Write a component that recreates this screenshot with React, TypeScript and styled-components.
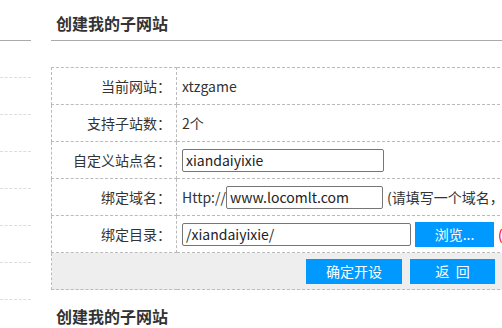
import React from "react";
import styled, { createGlobalStyle } from "styled-components";

const Global = createGlobalStyle`
  html, body { margin: 0; padding: 0; background: #fff; overflow: hidden; }
  body { font-family: "Noto Sans CJK SC", "Noto Sans", sans-serif; color: #333; font-size: 14px; }
  #root { width: 502px; height: 328px; overflow: hidden; }
`;

const Page = styled.div`
  display: flex;
  gap: 20px;
  width: 800px;
`;

const Sidebar = styled.div`
  width: 31px;
  flex: none;
`;

const SideHead = styled.div`
  height: 40px;
  border-bottom: 1px solid #aaa;
`;

const SideItem = styled.div`
  height: 36px;
  border-bottom: 1px dashed #ddd;
`;

const Main = styled.div`
  flex: 1;
  display: flex;
  flex-direction: column;
`;

const Title = styled.h2<{ $line?: boolean }>`
  margin: 0;
  height: 41px;
  box-sizing: border-box;
  padding: 8px 0 0 5px;
  line-height: 30px;
  font-size: 16px;
  font-weight: bold;
  color: #333;
  border-bottom: ${(p) => (p.$line ? "1px solid #aaa" : "none")};
`;

const Table = styled.table`
  margin-top: 26px;
  width: 699px;
  border-collapse: collapse;
  font-size: 14px;
`;

const Row = styled.tr`
  height: 37px;
`;

const Label = styled.td`
  width: 119px;
  border: 1px dashed #bbb;
  text-align: right;
  padding: 0 5px 0 0;
  vertical-align: middle;
  white-space: nowrap;
`;

const Value = styled.td`
  border: 1px dashed #bbb;
  padding: 0 0 0 5px;
  vertical-align: middle;
  white-space: nowrap;
`;

const Inline = styled.div`
  display: flex;
  align-items: center;
`;

const Input = styled.input<{ $w: number }>`
  width: ${(p) => p.$w}px;
  height: 23px;
  box-sizing: border-box;
  border: 1px solid #767676;
  border-radius: 2px;
  padding: 0 3px;
  font: inherit;
  font-size: 14px;
  color: #222;
  outline: none;
`;

const Hint = styled.span`
  margin-left: 4px;
  color: #333;
`;

const Warn = styled.span`
  margin-left: 4px;
  color: #e00;
`;

const BlueButton = styled.button<{ $w: number; $ml?: number }>`
  width: ${(p) => p.$w}px;
  height: 25px;
  margin-left: ${(p) => p.$ml ?? 0}px;
  border: none;
  border-radius: 0;
  background: #0099ff;
  color: #fff;
  font: inherit;
  font-size: 14px;
  padding: 0;
  cursor: pointer;
  white-space: pre;
`;

const ButtonCell = styled.td`
  border: 1px dashed #bbb;
  background: #eee;
  height: 36px;
  padding: 0;
  vertical-align: middle;
`;

const Buttons = styled.div`
  display: flex;
  justify-content: center;
  gap: 8px;
`;

const NextTitle = styled(Title)`
  margin-top: 3px;
`;

export default function App() {
  return (
    <>
      <Global />
      <Page>
        <Sidebar>
          <SideHead />
          {Array.from({ length: 8 }).map((_, i) => (
            <SideItem key={i} />
          ))}
        </Sidebar>
        <Main>
          <Title $line>创建我的子网站</Title>
          <Table>
            <tbody>
              <Row>
                <Label>当前网站：</Label>
                <Value>xtzgame</Value>
              </Row>
              <Row>
                <Label>支持子站数：</Label>
                <Value>2个</Value>
              </Row>
              <Row>
                <Label>自定义站点名：</Label>
                <Value>
                  <Inline>
                    <Input $w={202} defaultValue="xiandaiyixie" />
                  </Inline>
                </Value>
              </Row>
              <Row>
                <Label>绑定域名：</Label>
                <Value>
                  <Inline>
                    <span>Http://</span>
                    <Input $w={157} defaultValue="www.locomlt.com" />
                    <Hint>(请填写一个域名，不要带http://)</Hint>
                  </Inline>
                </Value>
              </Row>
              <Row>
                <Label>绑定目录：</Label>
                <Value>
                  <Inline>
                    <Input $w={229} defaultValue="/xiandaiyixie/" />
                    <BlueButton $w={79} $ml={4}>浏览...</BlueButton>
                    <Warn>(必须以/开头和结尾)</Warn>
                  </Inline>
                </Value>
              </Row>
              <Row>
                <ButtonCell colSpan={2}>
                  <Buttons>
                    <BlueButton $w={96}>确定开设</BlueButton>
                    <BlueButton $w={85}>返  回</BlueButton>
                  </Buttons>
                </ButtonCell>
              </Row>
            </tbody>
          </Table>
          <NextTitle>创建我的子网站</NextTitle>
        </Main>
      </Page>
    </>
  );
}
